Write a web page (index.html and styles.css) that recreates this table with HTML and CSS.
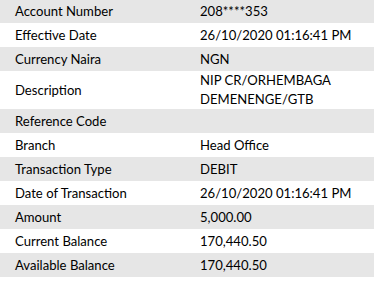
FILE: index.html
```
<!DOCTYPE html>
<html lang="en">
<head>
<meta charset="utf-8">
<title>Transaction Details</title>
<link rel="stylesheet" href="styles.css">
</head>
<body>
<div class="details">
  <div class="row shade first"><div class="label">Account Number</div><div class="value">208****353</div></div>
  <div class="row"><div class="label">Effective Date</div><div class="value">26/10/2020 01:16:41 PM</div></div>
  <div class="row shade"><div class="label">Currency Naira</div><div class="value">NGN</div></div>
  <div class="row tall"><div class="label">Description</div><div class="value">NIP CR/ORHEMBAGA<br>DEMENENGE/GTB</div></div>
  <div class="row shade"><div class="label">Reference Code</div><div class="value"></div></div>
  <div class="row"><div class="label">Branch</div><div class="value">Head Office</div></div>
  <div class="row shade"><div class="label">Transaction Type</div><div class="value">DEBIT</div></div>
  <div class="row"><div class="label">Date of Transaction</div><div class="value">26/10/2020 01:16:41 PM</div></div>
  <div class="row shade"><div class="label">Amount</div><div class="value">5,000.00</div></div>
  <div class="row"><div class="label">Current Balance</div><div class="value">170,440.50</div></div>
  <div class="row shade"><div class="label">Available Balance</div><div class="value">170,440.50</div></div>
</div>
</body>
</html>
```
FILE: styles.css
```
html, body {
  margin: 0;
  padding: 0;
  background: #ffffff;
}
body {
  font-family: "Lato", "Open Sans", sans-serif;
  font-size: 13.1px;
  color: #000000;
}
.details {
  display: flex;
  flex-direction: column;
  width: 374px;
}
.row {
  display: grid;
  grid-template-columns: 200px 1fr;
  align-items: center;
  height: 24px;
  line-height: 19px;
}
.row.first {
  height: 23px;
}
.row.tall {
  height: 38px;
}
.shade {
  background: #e6e6e6;
}
.label {
  padding-left: 15px;
}
```
